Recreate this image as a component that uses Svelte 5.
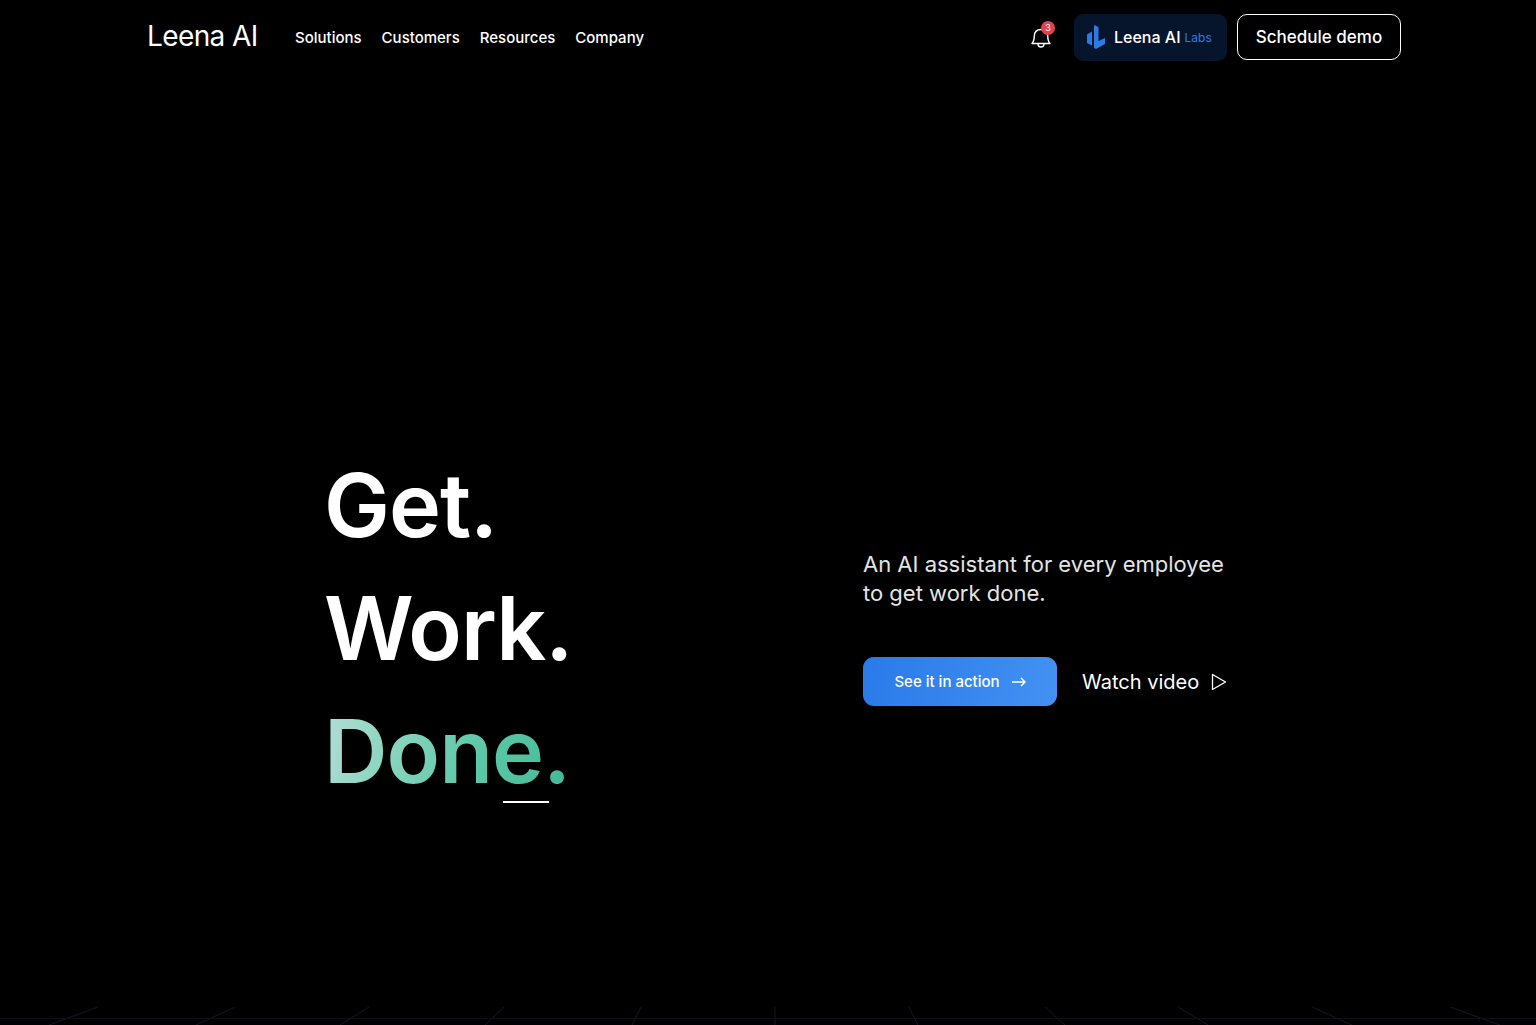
<script>
	const links = ['Solutions', 'Customers', 'Resources', 'Company'];

	// faint perspective lines along the bottom edge: [top x, bottom x]
	const gridLines = [
		[98, 49], [235, 196], [369, 340], [504, 485], [641, 632], [775, 775],
		[909, 918], [1045, 1065], [1178, 1208], [1312, 1352], [1450, 1500]
	];
</script>

<div class="page">
	<header class="nav">
		<div class="nav-left">
			<div class="logo">
				<span>Leena AI</span>
				<svg class="bubble" width="40" height="30" viewBox="0 0 40 30" fill="none">
					<path d="M8 24.5 C2 20 2 7 13 5 L27 5 C37 5 38 21 27 22.5 L16 22.5 L8 27.5 Z" stroke="#fff" stroke-width="1.8" stroke-linejoin="round" />
				</svg>
			</div>
			<nav class="links">
				{#each links as link}
					<a href="#top">{link}</a>
				{/each}
			</nav>
		</div>
		<div class="nav-right">
			<div class="bell">
				<svg width="22" height="24" viewBox="0 0 22 24" fill="none" stroke="#fff" stroke-width="1.4" stroke-linejoin="round">
					<path d="M2 18.5 C4 16.5 4.2 14 4.3 11 C4.5 7 7 4.5 11 4.5 C15 4.5 17.5 7 17.7 11 C17.8 14 18 16.5 20 18.5 Z" />
					<path d="M8 19 C8 23 14 23 14 19" />
				</svg>
				<span class="badge">3</span>
			</div>
			<a class="labs" href="#top">
				<svg width="20" height="26" viewBox="0 0 20 26">
					<path d="M8 1 L12.5 3 V17 L19 14 V20 L10 25 L8 24 Z" fill="#2c7be5" />
					<path d="M1 10.5 L6 7.5 V21.5 L1 19 Z" fill="#2c7be5" />
				</svg>
				<span class="labs-name">Leena AI</span>
				<span class="labs-tag">Labs</span>
			</a>
			<a class="demo" href="#top">Schedule demo</a>
		</div>
	</header>

	<main class="hero">
		<h1>
			<span>Get.</span>
			<span>Work.</span>
			<span class="done">Done.<i class="underline"></i></span>
		</h1>
		<div class="side">
			<p>An AI assistant for every employee<br />to get work done.</p>
			<div class="actions">
				<a class="cta" href="#top">
					See it in action
					<svg width="14" height="10" viewBox="0 0 14 10" fill="none" stroke="#fff" stroke-width="1.5">
						<path d="M0 5 H13 M9 1 L13 5 L9 9" />
					</svg>
				</a>
				<a class="watch" href="#top">
					Watch video
					<svg width="16" height="18" viewBox="0 0 16 18" fill="none" stroke="#fff" stroke-width="1.3" stroke-linejoin="round">
						<path d="M1.5 1.5 L14.5 9 L1.5 16.5 Z" />
					</svg>
				</a>
			</div>
		</div>
	</main>

	<svg class="grid" width="1536" height="18" viewBox="0 1007 1536 18" fill="none" stroke="#14181f" stroke-width="1">
		{#each gridLines as [top, bottom]}
			<line x1={top} y1="1007" x2={bottom} y2="1025" />
		{/each}
		<line x1="0" y1="1018.5" x2="1536" y2="1018.5" stroke="#0b0e14" />
	</svg>
</div>

<style>
	:global(body) {
		background: #000;
		color: #fff;
		font-family: Inter, "Liberation Sans", sans-serif;
	}

	.page {
		position: relative;
		height: 1025px;
		overflow: hidden;
		background: #000;
	}

	a {
		color: inherit;
		text-decoration: none;
	}

	.nav {
		display: flex;
		justify-content: space-between;
		align-items: center;
		height: 74px;
		padding: 0 135px 0 147px;
	}

	.nav-left,
	.nav-right {
		display: flex;
		align-items: center;
	}

	.logo {
		position: relative;
		width: 109px;
		font-size: 28px;
		font-weight: 400;
		letter-spacing: -0.6px;
		line-height: 34px;
		margin-top: -3px;
		white-space: nowrap;
	}

	.bubble {
		position: absolute;
		left: 11px;
		top: 7px;
		background: #000;
		display: none;
	}

	.links {
		display: flex;
		gap: 20px;
		margin-left: 39px;
		font-size: 15px;
		font-weight: 500;
	}

	.bell {
		position: relative;
		width: 22px;
		height: 24px;
		margin-right: 22px;
	}

	.badge {
		position: absolute;
		top: -4px;
		right: -3px;
		width: 14px;
		height: 14px;
		border-radius: 50%;
		background: #e5404f;
		font-size: 9px;
		line-height: 14px;
		text-align: center;
	}

	.labs {
		display: flex;
		align-items: center;
		width: 153px;
		height: 47px;
		box-sizing: border-box;
		padding-left: 12px;
		border-radius: 9px;
		background: #07152c;
	}

	.labs-name {
		margin-left: 8px;
		font-size: 16px;
		font-weight: 500;
	}

	.labs-tag {
		margin-left: 4px;
		font-size: 12px;
		color: #2c7be5;
	}

	.demo {
		display: flex;
		align-items: center;
		justify-content: center;
		width: 164px;
		height: 46px;
		box-sizing: border-box;
		margin-left: 10px;
		border: 1px solid #fff;
		border-radius: 10px;
		font-size: 17px;
		font-weight: 500;
	}

	.hero {
		display: flex;
		padding: 370px 0 0 324px;
	}

	h1 {
		display: flex;
		flex-direction: column;
		width: 539px;
		margin: 0;
		font-size: 88px;
		font-weight: 600;
		line-height: 123px;
		letter-spacing: -1px;
	}

	.done {
		position: relative;
		align-self: flex-start;
		background: linear-gradient(110deg, #b7e0d8 0%, #5ec8a8 60%, #3fb996 100%);
		background-clip: text;
		-webkit-background-clip: text;
		color: transparent;
	}

	.underline {
		position: absolute;
		left: 179px;
		right: 21px;
		bottom: 10px;
		height: 2px;
		background: #fff;
	}

	.side {
		padding-top: 106px;
	}

	p {
		margin: 0;
		font-size: 22px;
		line-height: 29px;
		color: #e4e4e4;
	}

	.actions {
		display: flex;
		align-items: center;
		margin-top: 49px;
	}

	.cta {
		display: flex;
		align-items: center;
		justify-content: center;
		gap: 12px;
		width: 194px;
		height: 49px;
		border-radius: 11px;
		background: linear-gradient(100deg, #2a7aea 0%, #4391f2 100%);
		font-size: 15px;
		font-weight: 500;
	}

	.watch {
		display: flex;
		align-items: center;
		gap: 12px;
		margin-left: 25px;
		font-size: 20px;
	}

	.grid {
		position: absolute;
		left: 0;
		bottom: 0;
	}
</style>
